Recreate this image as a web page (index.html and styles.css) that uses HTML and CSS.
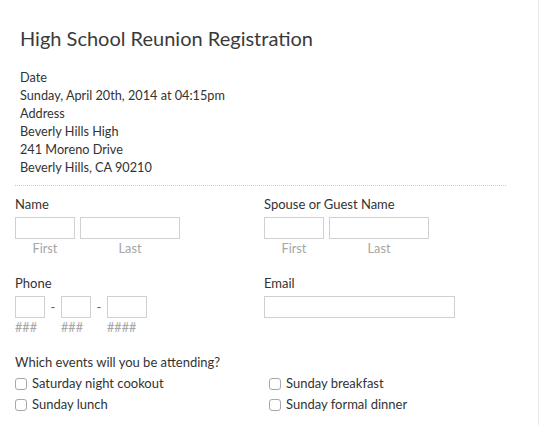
FILE: index.html
```html
<!DOCTYPE html>
<html>
<head>
<meta charset="utf-8">
<link rel="stylesheet" href="styles.css">
</head>
<body>
<div class="page">
  <h1 class="title">High School Reunion Registration</h1>
  <div class="info">
    <div>Date</div>
    <div>Sunday, April 20th, 2014 at 04:15pm</div>
    <div>Address</div>
    <div>Beverly Hills High</div>
    <div>241 Moreno Drive</div>
    <div>Beverly Hills, CA 90210</div>
  </div>
  <div class="divider"></div>
  <div class="form">
    <div class="row">
      <div class="field">
        <div class="label">Name</div>
        <div class="name-inputs">
          <div class="sub"><div class="box first"></div><div class="hint center">First</div></div>
          <div class="sub"><div class="box last"></div><div class="hint center">Last</div></div>
        </div>
      </div>
      <div class="field">
        <div class="label">Spouse or Guest Name</div>
        <div class="name-inputs">
          <div class="sub"><div class="box first"></div><div class="hint center">First</div></div>
          <div class="sub"><div class="box last"></div><div class="hint center">Last</div></div>
        </div>
      </div>
    </div>
    <div class="row row-2">
      <div class="field">
        <div class="label">Phone</div>
        <div class="phone-inputs">
          <div class="sub"><div class="box p3"></div><div class="hint">###</div></div>
          <span class="dash">-</span>
          <div class="sub"><div class="box p3"></div><div class="hint">###</div></div>
          <span class="dash">-</span>
          <div class="sub"><div class="box p4"></div><div class="hint">####</div></div>
        </div>
      </div>
      <div class="field">
        <div class="label">Email</div>
        <div class="box email"></div>
      </div>
    </div>
    <div class="events">
      <div class="label">Which events will you be attending?</div>
      <div class="checks">
        <label class="check"><span class="cb"></span>Saturday night cookout</label>
        <label class="check"><span class="cb"></span>Sunday breakfast</label>
        <label class="check"><span class="cb"></span>Sunday lunch</label>
        <label class="check"><span class="cb"></span>Sunday formal dinner</label>
      </div>
    </div>
  </div>
</div>
</body>
</html>
```
FILE: styles.css
```css
html, body {
  margin: 0;
  padding: 0;
  background: #fff;
}
body {
  font-family: Lato, "Open Sans", sans-serif;
  color: #333;
}
.page {
  width: 538px;
  height: 425px;
  border-right: 1px solid #e8e8e8;
  box-sizing: content-box;
  overflow: hidden;
}
.title {
  margin: 0;
  padding: 25px 0 0 20px;
  font-size: 20px;
  font-weight: 400;
  line-height: 26px;
  color: #3a3a3a;
}
.info {
  padding: 17px 0 0 20px;
  font-size: 12.7px;
  line-height: 18px;
  color: #333;
}
.divider {
  margin: 9px 32px 0 15px;
  border-top: 1px dotted #c8c8c8;
}
.form {
  padding: 9px 0 0 15px;
  font-size: 13px;
}
.row {
  display: grid;
  grid-template-columns: 249px 249px;
}
.row-2 {
  margin-top: 17px;
}
.label {
  line-height: 18px;
  color: #333;
}
.name-inputs, .phone-inputs {
  display: flex;
  margin-top: 4px;
}
.name-inputs {
  gap: 5px;
}
.sub {
  display: flex;
  flex-direction: column;
}
.box {
  height: 22px;
  border: 1px solid #d0d0d0;
  box-sizing: border-box;
  background: #fff;
}
.first { width: 60px; }
.last { width: 100px; }
.p3 { width: 30px; }
.p4 { width: 40px; }
.email {
  width: 191px;
  margin-top: 4px;
}
.hint {
  font-size: 12.7px;
  line-height: 18px;
  color: #a6a6a6;
}
.center {
  text-align: center;
}
.dash {
  width: 16px;
  text-align: center;
  line-height: 22px;
  color: #666;
}
.events {
  margin-top: 17px;
}
.checks {
  display: grid;
  grid-template-columns: 254px 254px;
  margin-top: 2px;
}
.check {
  display: flex;
  align-items: center;
  gap: 5px;
  line-height: 21px;
  color: #333;
}
.cb {
  width: 12px;
  height: 12px;
  border: 1px solid #a8a8a8;
  border-radius: 3px;
  box-sizing: border-box;
  background: #fff;
}
```
